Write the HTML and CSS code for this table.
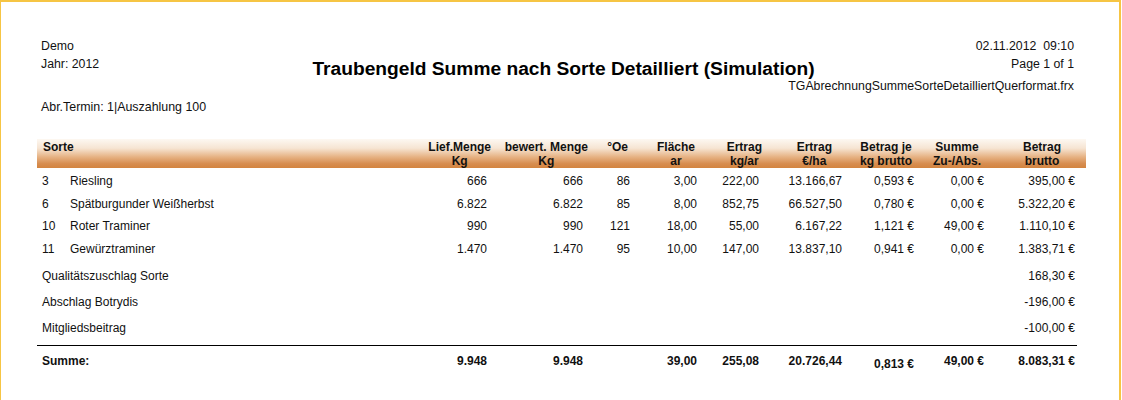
FILE: index.html
```html
<!DOCTYPE html>
<html lang="de">
<head>
<meta charset="utf-8">
<title>Traubengeld Summe nach Sorte Detailliert (Simulation)</title>
<link rel="stylesheet" href="styles.css">
</head>
<body>
<div class="page">
  <header class="report-head">
    <div class="head-left">
      <div class="line">Demo</div>
      <div class="line">Jahr: 2012</div>
    </div>
    <h1 class="title">Traubengeld Summe nach Sorte Detailliert (Simulation)</h1>
    <div class="head-right">
      <div class="line">02.11.2012&nbsp;&nbsp;09:10</div>
      <div class="line">Page 1 of 1</div>
      <div class="line file">TGAbrechnungSummeSorteDetailliertQuerformat.frx</div>
    </div>
  </header>
  <div class="termin">Abr.Termin: 1|Auszahlung 100</div>

  <div class="table">
    <div class="thead">
      <div class="th sorte">Sorte</div>
      <div class="th"><span>Lief.Menge<br>Kg</span></div>
      <div class="th"><span>bewert. Menge<br>Kg</span></div>
      <div class="th"><span>°Oe</span></div>
      <div class="th"><span>Fläche<br>ar</span></div>
      <div class="th"><span>Ertrag<br>kg/ar</span></div>
      <div class="th"><span>Ertrag<br>€/ha</span></div>
      <div class="th"><span>Betrag je<br>kg brutto</span></div>
      <div class="th"><span>Summe<br>Zu-/Abs.</span></div>
      <div class="th"><span>Betrag<br>brutto</span></div>
    </div>

    <div class="tbody">
      <div class="row">
        <div class="nr">3</div><div class="name">Riesling</div>
        <div>666</div><div>666</div><div>86</div><div>3,00</div><div>222,00</div><div>13.166,67</div><div>0,593 €</div><div>0,00 €</div><div>395,00 €</div>
      </div>
      <div class="row">
        <div class="nr">6</div><div class="name">Spätburgunder Weißherbst</div>
        <div>6.822</div><div>6.822</div><div>85</div><div>8,00</div><div>852,75</div><div>66.527,50</div><div>0,780 €</div><div>0,00 €</div><div>5.322,20 €</div>
      </div>
      <div class="row">
        <div class="nr">10</div><div class="name">Roter Traminer</div>
        <div>990</div><div>990</div><div>121</div><div>18,00</div><div>55,00</div><div>6.167,22</div><div>1,121 €</div><div>49,00 €</div><div>1.110,10 €</div>
      </div>
      <div class="row">
        <div class="nr">11</div><div class="name">Gewürztraminer</div>
        <div>1.470</div><div>1.470</div><div>95</div><div>10,00</div><div>147,00</div><div>13.837,10</div><div>0,941 €</div><div>0,00 €</div><div>1.383,71 €</div>
      </div>
    </div>

    <div class="extras">
      <div class="extra"><span>Qualitätszuschlag Sorte</span><span>168,30 €</span></div>
      <div class="extra"><span>Abschlag Botrydis</span><span>-196,00 €</span></div>
      <div class="extra"><span>Mitgliedsbeitrag</span><span>-100,00 €</span></div>
    </div>

    <div class="row total">
      <div class="sum-label">Summe:</div>
      <div>9.948</div><div>9.948</div><div></div><div>39,00</div><div>255,08</div><div>20.726,44</div><div class="low">0,813 €</div><div>49,00 €</div><div>8.083,31 €</div>
    </div>
  </div>
</div>
</body>
</html>
```

FILE: styles.css
```css
* { box-sizing: border-box; }

html, body {
  margin: 0;
  padding: 0;
  background: #ffffff;
}

body {
  font-family: "Liberation Sans", Arial, sans-serif;
  font-size: 12px;
  color: #111111;
}

.page {
  width: 1121px;
  height: 400px;
  border-top: 2px solid #f6c544;
  border-left: 1px solid #f6c544;
  border-right: 2px solid #f6c544;
  padding: 35px 33px 0 36px;
  overflow: hidden;
}

/* ---------- report header ---------- */
.report-head {
  display: grid;
  grid-template-columns: minmax(0, 1fr) auto minmax(0, 1fr);
  align-items: start;
  padding: 0 12px 0 4px;
  font-size: 12.3px;
}

.line {
  line-height: 18px;
  white-space: nowrap;
}

.head-right {
  display: flex;
  flex-direction: column;
  align-items: flex-end;
}

.head-right .file {
  margin-top: 4px;
}

.title {
  margin: 21px 0 0 12px;
  font-size: 19.2px;
  line-height: 22px;
  font-weight: bold;
  color: #000;
  white-space: nowrap;
}

.termin {
  margin-top: 3px;
  padding-left: 4px;
  line-height: 18px;
  font-size: 12.4px;
}

/* ---------- table ---------- */
.table {
  margin-top: 23px;
}

.thead,
.row {
  display: grid;
  grid-template-columns: 29px 362px 64px 96px 43px 67px 64px 80px 73px 70px 91px 10px;
}

.thead {
  height: 29px;
  padding-top: 1px;
  font-weight: bold;
  line-height: 14px;
  background: linear-gradient(to bottom,
    #fdf8f2 0%,
    #f6e4d2 32%,
    #e6b283 62%,
    #d78d50 85%,
    #d3843f 100%);
}

.th {
  text-align: right;
  white-space: nowrap;
}

.th span {
  display: inline-block;
  text-align: center;
}

.th.sorte {
  grid-column: 1 / span 2;
  text-align: left;
  padding-left: 6px;
}

.thead > :nth-child(2)  { padding-right: 1px; }
.thead > :nth-child(3)  { padding-right: 0; }
.thead > :nth-child(4)  { padding-right: 3px; }
.thead > :nth-child(5)  { padding-right: 3px; }
.thead > :nth-child(6)  { padding-right: 0; }
.thead > :nth-child(7)  { padding-right: 10px; }
.thead > :nth-child(8)  { padding-right: 3px; }
.thead > :nth-child(9)  { padding-right: 4px; }
.thead > :nth-child(10) { padding-right: 15px; }

.tbody {
  margin-top: 2px;
}

.row > div {
  text-align: right;
  white-space: nowrap;
}

.tbody .row {
  height: 22.6px;
  line-height: 22.6px;
}

.row > .nr {
  text-align: left;
  padding-left: 5px;
}

.row > .name {
  text-align: left;
  padding-left: 4px;
}

.tbody .row > :nth-child(3)  { padding-right: 5px; }
.tbody .row > :nth-child(4)  { padding-right: 5px; }
.tbody .row > :nth-child(5)  { padding-right: 1px; }
.tbody .row > :nth-child(6)  { padding-right: 1px; }
.tbody .row > :nth-child(7)  { padding-right: 3px; }
.tbody .row > :nth-child(8)  { padding-right: 0; }
.tbody .row > :nth-child(9)  { padding-right: 1px; }
.tbody .row > :nth-child(10) { padding-right: 1px; }
.tbody .row > :nth-child(11) { padding-right: 1px; }

.extras {
  margin-top: 3px;
}

.extra {
  display: flex;
  justify-content: space-between;
  height: 26px;
  line-height: 26px;
  padding: 0 11px 0 5px;
}

/* ---------- total ---------- */
.total {
  margin-top: 4px;
  margin-right: 9px;
  border-top: 1px solid #000;
  height: 30px;
  line-height: 30px;
  font-weight: bold;
  grid-template-columns: 29px 362px 64px 96px 43px 67px 64px 80px 73px 70px 91px 1px;
}

.total > .sum-label {
  grid-column: 1 / span 2;
  text-align: left;
  padding-left: 5px;
}

.total > :nth-child(2)  { padding-right: 5px; }
.total > :nth-child(3)  { padding-right: 5px; }
.total > :nth-child(4)  { padding-right: 1px; }
.total > :nth-child(5)  { padding-right: 1px; }
.total > :nth-child(6)  { padding-right: 3px; }
.total > :nth-child(7)  { padding-right: 0; }
.total > :nth-child(8)  { padding-right: 1px; }
.total > :nth-child(9)  { padding-right: 1px; }
.total > :nth-child(10) { padding-right: 1px; }

.total > .low {
  padding-top: 3px;
}
```
